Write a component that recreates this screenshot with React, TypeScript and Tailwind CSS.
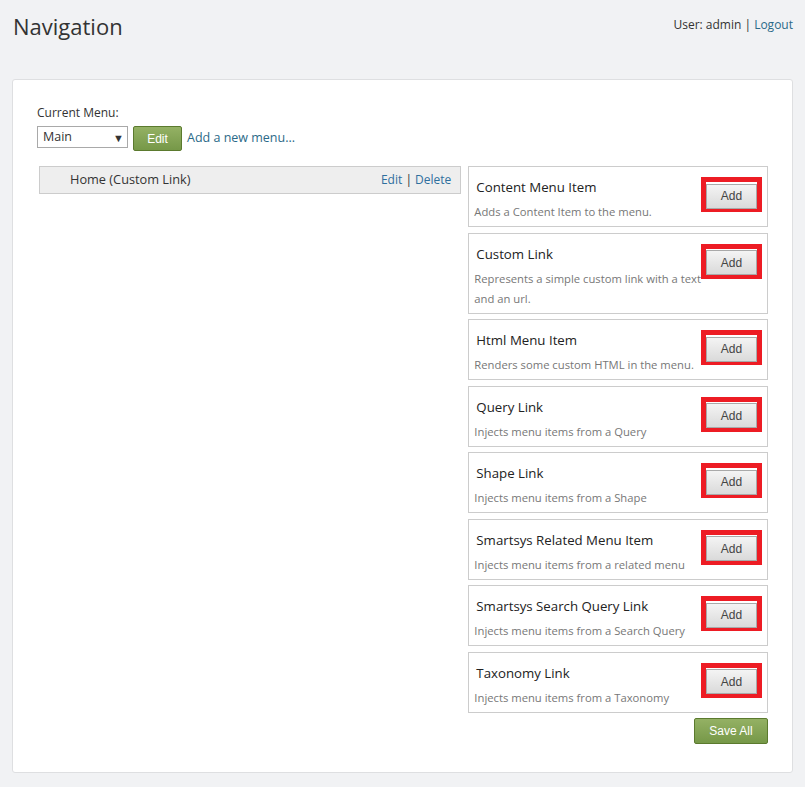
import React from "react";

const items: { title: string; desc: string[] }[] = [
  { title: "Content Menu Item", desc: ["Adds a Content Item to the menu."] },
  { title: "Custom Link", desc: ["Represents a simple custom link with a text", "and an url."] },
  { title: "Html Menu Item", desc: ["Renders some custom HTML in the menu."] },
  { title: "Query Link", desc: ["Injects menu items from a Query"] },
  { title: "Shape Link", desc: ["Injects menu items from a Shape"] },
  { title: "Smartsys Related Menu Item", desc: ["Injects menu items from a related menu"] },
  { title: "Smartsys Search Query Link", desc: ["Injects menu items from a Search Query"] },
  { title: "Taxonomy Link", desc: ["Injects menu items from a Taxonomy"] },
];

const font = { fontFamily: "'Open Sans', 'Noto Sans', sans-serif" };
const arial = { fontFamily: "'Liberation Sans', Arial, sans-serif" };

export default function App() {
  return (
    <div className="min-h-[787px] w-[805px] bg-[#f1f2f4] text-[#333]" style={font}>
      <div className="flex h-[79px] items-start justify-between pl-[13px] pr-[12px]">
        <h1 className="mt-[10px] text-[22px] leading-[32px] text-[#333]">Navigation</h1>
        <div className="mt-[15px] text-[12px] leading-[20px]">
          User: admin | <span className="text-[#2b6a88]">Logout</span>
        </div>
      </div>
      <div className="mx-[12px] rounded-[3px] border border-[#dedfe1] bg-white pb-[28px] pl-[24px] pr-[24px] pt-[24px]">
        <div className="text-[12px] leading-[18px]">Current Menu:</div>
        <div className="mt-[4px] flex items-start">
          <div className="flex h-[22px] w-[91px] items-center justify-between border border-[#a9a9a9] bg-white pl-[5px] pr-[3px] text-[12.5px]">
            <span>Main</span>
            <span className="text-[11px] leading-none">▼</span>
          </div>
          <button className="ml-[5px] h-[25px] w-[49px] rounded-[2px] border border-[#5b7a2e] bg-gradient-to-b from-[#94b164] to-[#769848] text-[12px] text-white" style={arial}>
            Edit
          </button>
          <span className="ml-[5px] mt-[2px] text-[12.5px] leading-[20px] text-[#2b6a88]">Add a new menu...</span>
        </div>
        <div className="mt-[15px] flex items-start gap-[7px]">
          <div className="ml-[2px] flex h-[28px] w-[423px] items-center justify-between border border-[#cccccc] bg-[#eeeeee] pl-[30px] pr-[9px]">
            <span className="text-[12.75px]">Home (Custom Link)</span>
            <span className="text-[12px]">
              <span className="text-[#2e6f9e]">Edit</span> | <span className="text-[#2e6f9e]">Delete</span>
            </span>
          </div>
          <div className="flex w-[300px] flex-col gap-[5.5px]">
            {items.map((it) => (
              <div key={it.title} className="flex border border-[#cccccc] bg-white pb-[4px]">
                <div className="flex-1 pl-[5px] pt-[10px]">
                  <div className="pl-[2px] text-[13.25px] leading-[20px] text-[#222]">{it.title}</div>
                  <div className="mt-[5px] text-[11.25px] leading-[20px] text-[#777]">
                    {it.desc.map((d) => (
                      <div key={d} className="whitespace-nowrap">{d}</div>
                    ))}
                  </div>
                </div>
                <div className="mr-[5px] mt-[10px] h-[35px] border-[5px] border-[#ed1c24]">
                  <button className="h-[25px] w-[51px] border border-[#a9a9a9] bg-gradient-to-b from-[#f4f4f4] to-[#dadada] text-[12px] text-[#444]" style={arial}>
                    Add
                  </button>
                </div>
              </div>
            ))}
            <div className="mt-[-0.5px] flex justify-end">
              <button className="h-[26px] w-[74px] rounded-[2px] border border-[#5b7a2e] bg-gradient-to-b from-[#94b164] to-[#769848] text-[12px] text-white" style={arial}>
                Save All
              </button>
            </div>
          </div>
        </div>
      </div>
    </div>
  );
}
